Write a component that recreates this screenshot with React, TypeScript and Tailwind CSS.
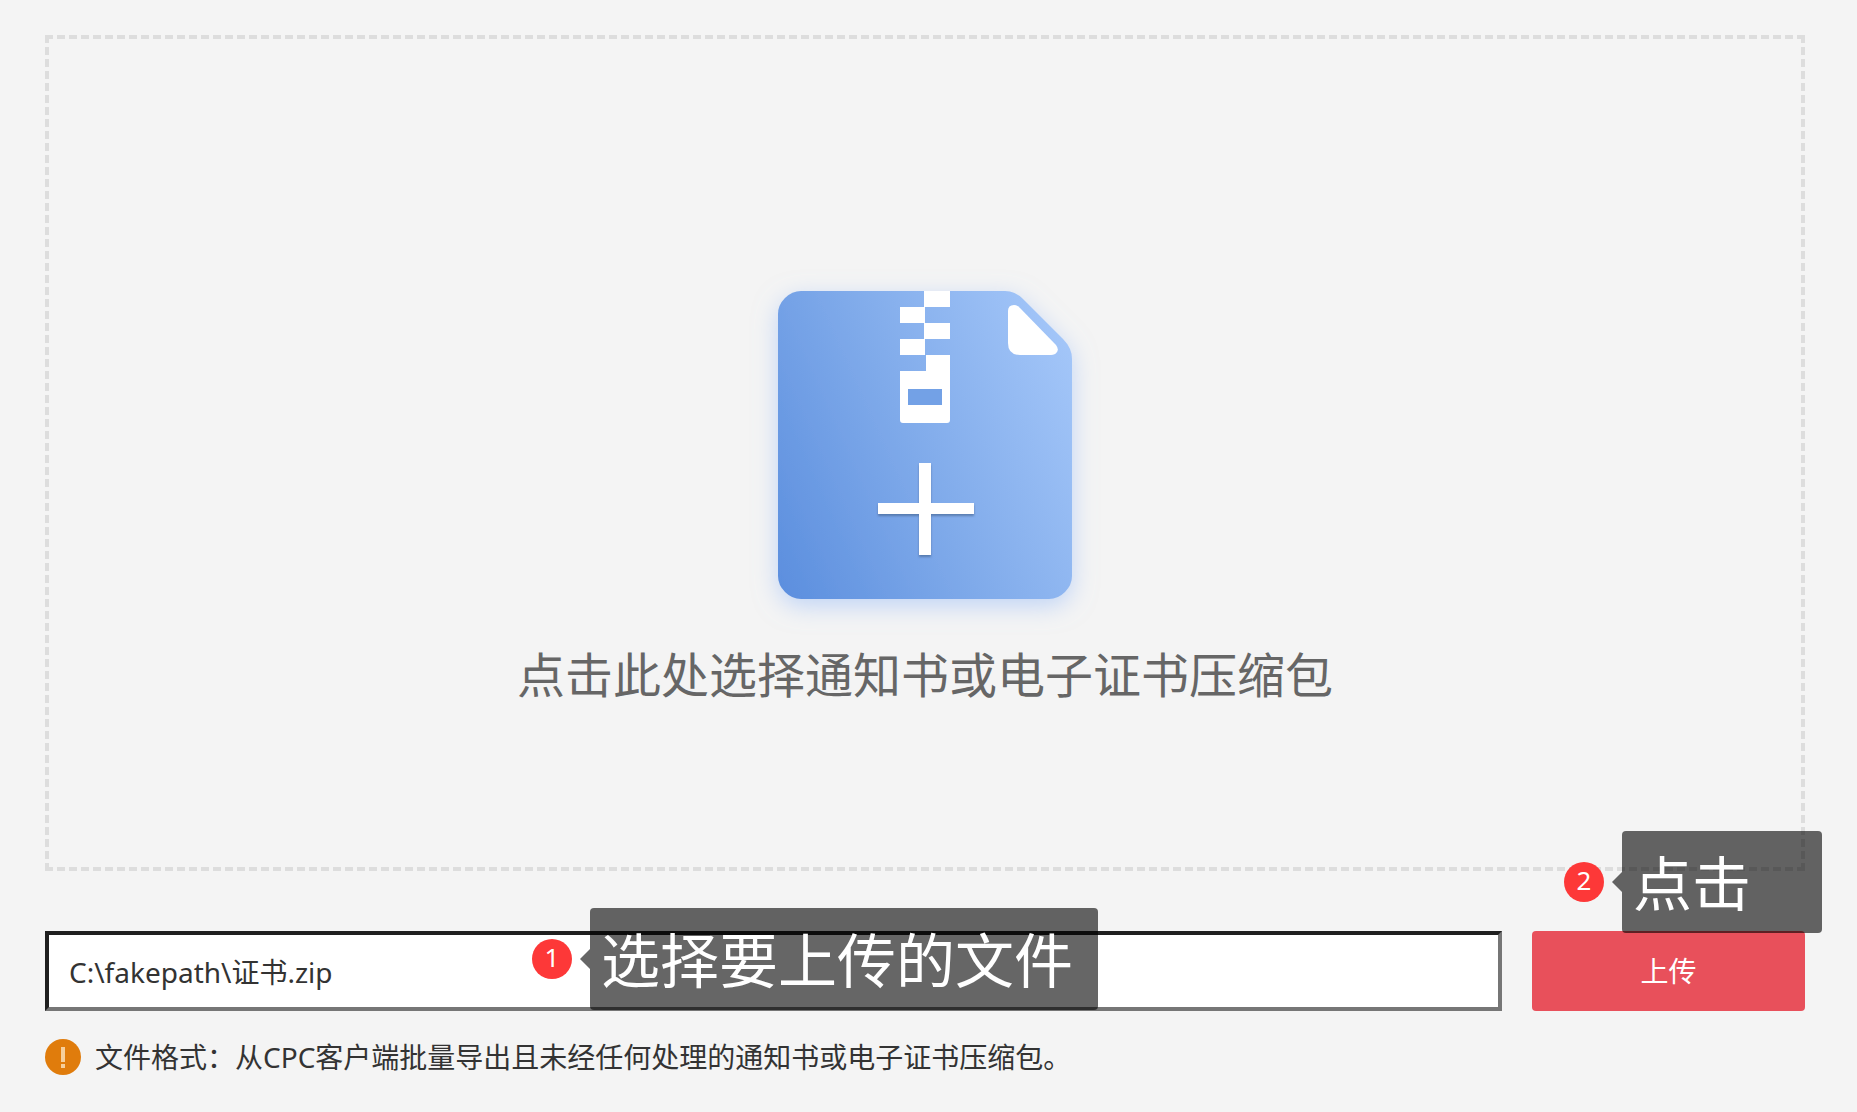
import { useState } from "react";

type CalloutProps = {
  step: number;
  text: string;
  className: string;
  boxClassName: string;
};

const Callout = ({ step, text, className, boxClassName }: CalloutProps) => {
  return (
    <div
      className={`pointer-events-none absolute flex items-center text-white ${className}`}
    >
      <span className="mr-2 flex h-10 w-10 shrink-0 items-center justify-center rounded-full bg-[#fd3838] pb-1 text-[26px] leading-9">
        {step}
      </span>
      <svg className="h-5 w-[10px] shrink-0" viewBox="0 0 10 20">
        <path d="M0 10 10 0V20Z" fill="#000" fillOpacity="0.6" />
      </svg>
      <span
        className={`h-[102px] shrink-0 whitespace-nowrap rounded-sm bg-black/60 px-[11px] text-[59px] leading-[104px] ${boxClassName}`}
      >
        {text}
      </span>
    </div>
  );
};

const ZipIcon = () => {
  return (
    <svg
      width="294"
      height="308"
      viewBox="0 0 294 308"
      className="overflow-visible"
      aria-hidden="true"
    >
      <defs>
        <linearGradient
          id="zip-body"
          gradientUnits="userSpaceOnUse"
          x1="0"
          y1="308"
          x2="334"
          y2="158"
        >
          <stop offset="0" stopColor="#5b8ede" />
          <stop offset="0.5" stopColor="#7faaea" />
          <stop offset="1" stopColor="#a2c5f8" />
        </linearGradient>
        <filter id="zip-shadow" x="-20%" y="-20%" width="140%" height="140%">
          <feDropShadow
            dx="0"
            dy="7"
            stdDeviation="12"
            floodColor="#8ab4f8"
            floodOpacity="0.5"
          />
        </filter>
        <filter id="plus-shadow" x="-10%" y="-10%" width="120%" height="120%">
          <feDropShadow
            dx="0"
            dy="2"
            stdDeviation="1"
            floodColor="#3f5f88"
            floodOpacity="0.6"
          />
        </filter>
      </defs>
      <path
        d="M23 0H227Q237 0 245 8L285 48Q294 57 294 68V285Q294 294 287 301T271 308H23Q14 308 7 301T0 285V23Q0 14 7 7T23 0Z"
        fill="url(#zip-body)"
        filter="url(#zip-shadow)"
      />
      <path
        d="M146 0H172V16H147V32H172V48H147V64H122V48H146V32H122V16H146Z"
        fill="#fff"
      />
      <path
        d="M148 64H172V129Q172 132 169 132H125Q122 132 122 129V80H148Z"
        fill="#fff"
      />
      <path d="M130 98H164V114H130Z" fill="#73a1e6" />
      <path
        d="M230 20Q230 14 236 14Q239 14 242 17L278 54Q281 58 279 61Q277 64 273 64H242Q230 64 230 52Z"
        fill="#fff"
      />
      <path
        d="M141 172H153V212H196V223H153V264H141V223H100V212H141Z"
        fill="#fff"
        filter="url(#plus-shadow)"
      />
    </svg>
  );
};

const App = () => {
  const [filePath, setFilePath] = useState("C:\\fakepath\\证书.zip");

  return (
    <main className="min-h-screen bg-[#f4f4f4] pt-[35px] pr-[52px] pb-9 pl-[45px] font-['Noto_Sans','Noto_Sans_CJK_SC',sans-serif] text-[28px] leading-9 text-[#333]">
      <label
        htmlFor="zip-file"
        className="flex min-h-[836px] cursor-pointer flex-col items-center gap-12 border-4 border-dashed border-[#ddd] pt-[252px]"
      >
        <ZipIcon />
        <span className="text-5xl leading-14 text-[#666]">
          点击此处选择通知书或电子证书压缩包
        </span>
        <input
          id="zip-file"
          type="file"
          accept=".zip"
          className="hidden"
          onChange={(e) => setFilePath(e.target.value)}
        />
      </label>

      <div className="mt-15 flex gap-[30px]">
        <div className="relative min-w-0 flex-1">
          <input
            type="text"
            value={filePath}
            readOnly
            aria-label="文件路径"
            className="h-20 w-full border-4 border-t-[#1f1f1f] border-r-[#767676] border-b-[#767676] border-l-[#1f1f1f] bg-white px-5 outline-none"
          />
          <Callout
            step={1}
            text="选择要上传的文件"
            className="bottom-px left-[487px]"
            boxClassName="w-[508px]"
          />
        </div>
        <div className="relative w-[273px] shrink-0">
          <button
            type="button"
            className="h-20 w-full cursor-pointer rounded-sm bg-[#e8505b] text-white"
          >
            上传
          </button>
          <Callout
            step={2}
            text="点击"
            className="bottom-[78px] left-8"
            boxClassName="w-[200px]"
          />
        </div>
      </div>

      <p className="mt-7 flex items-center gap-[14px]">
        <svg
          className="h-9 w-9 shrink-0"
          viewBox="0 0 36 36"
          aria-hidden="true"
        >
          <circle cx="18" cy="18" r="18" fill="#e07c0c" />
          <path d="M16 8H20V23H16Z" fill="#f6cf9c" />
          <path d="M16 25H20V29H16Z" fill="#f6cf9c" />
        </svg>
        <span>
          文件格式：从CPC客户端批量导出且未经任何处理的通知书或电子证书压缩包。
        </span>
      </p>
    </main>
  );
};

export default App;
